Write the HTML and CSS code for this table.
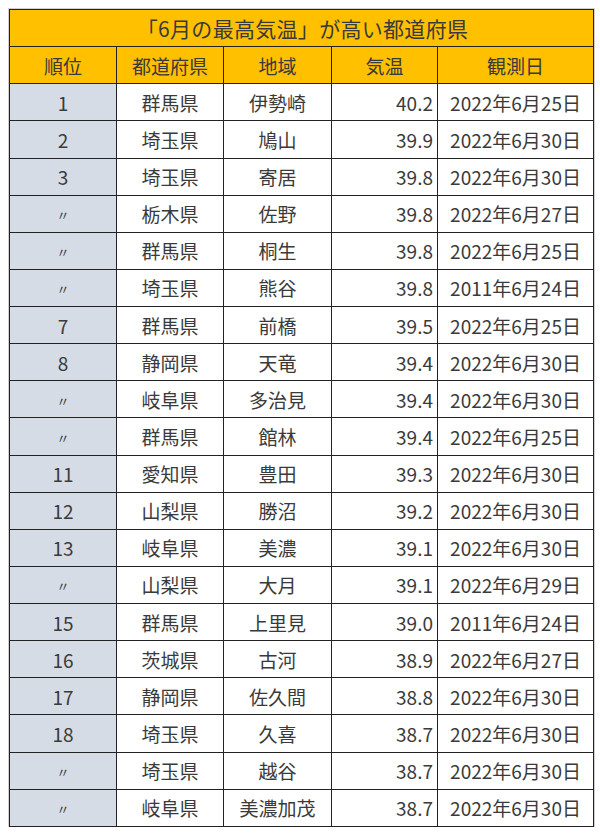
FILE: index.html
```html
<!DOCTYPE html>
<html lang="ja">
<head>
<meta charset="utf-8">
<link rel="stylesheet" href="styles.css">
</head>
<body>
<table class="ranking">
  <colgroup>
    <col class="c-rank"><col class="c-pref"><col class="c-area"><col class="c-temp"><col class="c-date">
  </colgroup>
  <thead>
    <tr><th class="title" colspan="5">「6月の最高気温」が高い都道府県</th></tr>
    <tr class="head"><th>順位</th><th>都道府県</th><th>地域</th><th>気温</th><th>観測日</th></tr>
  </thead>
  <tbody>
    <tr><td class="rank">1</td><td>群馬県</td><td>伊勢崎</td><td class="temp">40.2</td><td>2022年6月25日</td></tr>
    <tr><td class="rank">2</td><td>埼玉県</td><td>鳩山</td><td class="temp">39.9</td><td>2022年6月30日</td></tr>
    <tr><td class="rank">3</td><td>埼玉県</td><td>寄居</td><td class="temp">39.8</td><td>2022年6月30日</td></tr>
    <tr><td class="rank"><span class="ditto">〃</span></td><td>栃木県</td><td>佐野</td><td class="temp">39.8</td><td>2022年6月27日</td></tr>
    <tr><td class="rank"><span class="ditto">〃</span></td><td>群馬県</td><td>桐生</td><td class="temp">39.8</td><td>2022年6月25日</td></tr>
    <tr><td class="rank"><span class="ditto">〃</span></td><td>埼玉県</td><td>熊谷</td><td class="temp">39.8</td><td>2011年6月24日</td></tr>
    <tr><td class="rank">7</td><td>群馬県</td><td>前橋</td><td class="temp">39.5</td><td>2022年6月25日</td></tr>
    <tr><td class="rank">8</td><td>静岡県</td><td>天竜</td><td class="temp">39.4</td><td>2022年6月30日</td></tr>
    <tr><td class="rank"><span class="ditto">〃</span></td><td>岐阜県</td><td>多治見</td><td class="temp">39.4</td><td>2022年6月30日</td></tr>
    <tr><td class="rank"><span class="ditto">〃</span></td><td>群馬県</td><td>館林</td><td class="temp">39.4</td><td>2022年6月25日</td></tr>
    <tr><td class="rank">11</td><td>愛知県</td><td>豊田</td><td class="temp">39.3</td><td>2022年6月30日</td></tr>
    <tr><td class="rank">12</td><td>山梨県</td><td>勝沼</td><td class="temp">39.2</td><td>2022年6月30日</td></tr>
    <tr><td class="rank">13</td><td>岐阜県</td><td>美濃</td><td class="temp">39.1</td><td>2022年6月30日</td></tr>
    <tr><td class="rank"><span class="ditto">〃</span></td><td>山梨県</td><td>大月</td><td class="temp">39.1</td><td>2022年6月29日</td></tr>
    <tr><td class="rank">15</td><td>群馬県</td><td>上里見</td><td class="temp">39.0</td><td>2011年6月24日</td></tr>
    <tr><td class="rank">16</td><td>茨城県</td><td>古河</td><td class="temp">38.9</td><td>2022年6月27日</td></tr>
    <tr><td class="rank">17</td><td>静岡県</td><td>佐久間</td><td class="temp">38.8</td><td>2022年6月30日</td></tr>
    <tr><td class="rank">18</td><td>埼玉県</td><td>久喜</td><td class="temp">38.7</td><td>2022年6月30日</td></tr>
    <tr><td class="rank"><span class="ditto">〃</span></td><td>埼玉県</td><td>越谷</td><td class="temp">38.7</td><td>2022年6月30日</td></tr>
    <tr><td class="rank"><span class="ditto">〃</span></td><td>岐阜県</td><td>美濃加茂</td><td class="temp">38.7</td><td>2022年6月30日</td></tr>
  </tbody>
</table>
</body>
</html>
```

FILE: styles.css
```css
html, body {
  margin: 0;
  padding: 0;
  background: #ffffff;
}
body {
  padding: 9px 0 0 9px;
  font-family: "Noto Sans CJK JP", "Noto Sans", sans-serif;
  color: #3a3a3a;
}
.ranking {
  border-collapse: collapse;
  table-layout: fixed;
  width: 584px;
  outline: 1px solid #d0d0d0;
  font-size: 19px;
  line-height: 1;
}
.ranking tr {
  height: 37.14px;
}
.c-rank { width: 107px; }
.c-pref { width: 107px; }
.c-area { width: 108px; }
.c-temp { width: 106px; }
.c-date { width: 156px; }
.ranking th,
.ranking td {
  border: 1px solid #222222;
  padding: 0 4px;
  text-align: center;
  vertical-align: middle;
  font-weight: normal;
  white-space: nowrap;
  background: #ffffff;
}
.ranking th {
  background: #ffc000;
}
.ranking th.title {
  font-size: 21px;
  letter-spacing: 0.3px;
  padding-left: 6px;
}
.ranking td.rank {
  background: #d6dce5;
}
.ranking td.temp {
  text-align: right;
}
.ditto {
  display: inline-block;
  font-size: 13px;
  transform: translateY(-2px);
}
```
